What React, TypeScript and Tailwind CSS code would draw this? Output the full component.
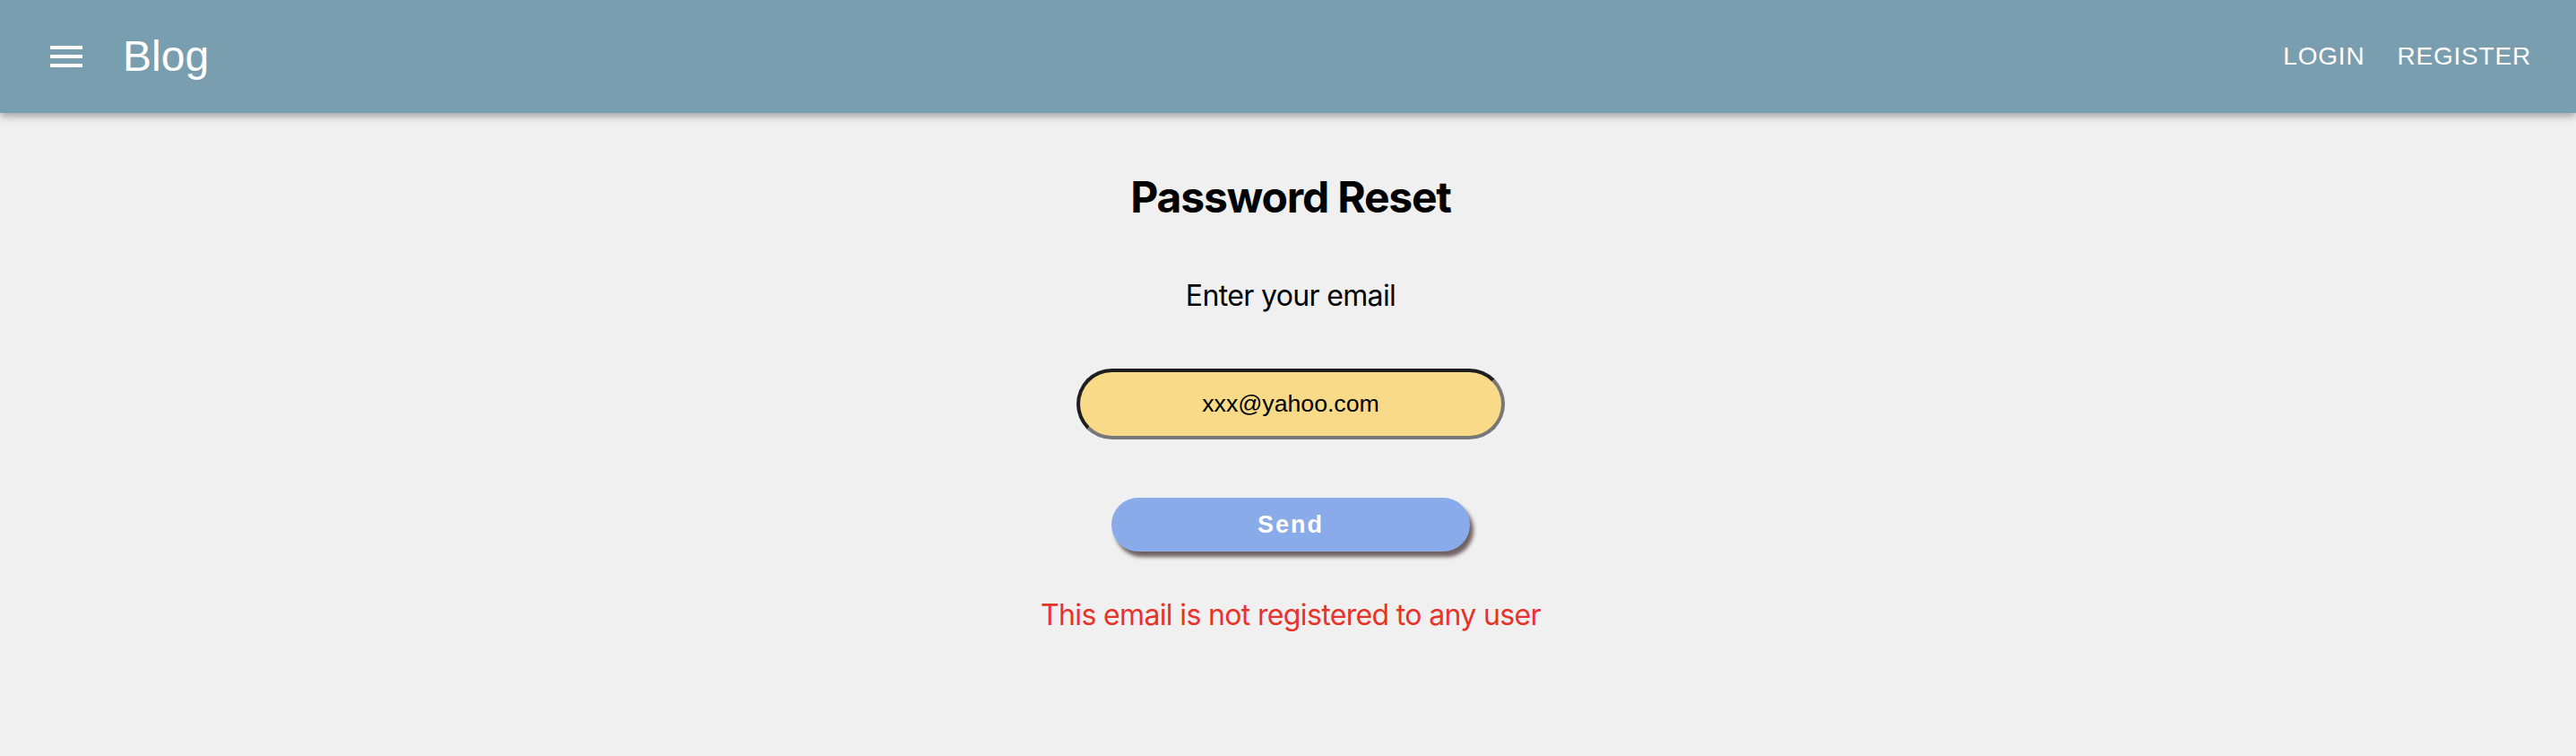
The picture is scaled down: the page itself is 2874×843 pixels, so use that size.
import React from "react";

export default function App() {
  return (
    <div className="min-h-[843px] w-full bg-[#f0f0f0]">
      <header className="relative z-10 flex h-[126px] items-center bg-[#799eb0] pl-[50px] pr-[50px] text-white shadow-[0_4px_8px_rgba(0,0,0,0.3)]">
        <svg width="48" height="48" viewBox="0 0 24 24" fill="white" aria-hidden="true">
          <path d="M3 18h18v-2H3v2zm0-5h18v-2H3v2zm0-7v2h18V6H3z" />
        </svg>
        <div className="ml-[39px] font-['Liberation_Sans',Arial,sans-serif] text-[48px] leading-none">Blog</div>
        <div className="ml-auto flex items-center gap-[36px] font-['Liberation_Sans',Arial,sans-serif] text-[28px] uppercase leading-none tracking-[0.8px]">
          <span>Login</span>
          <span>Register</span>
        </div>
      </header>
      <main className="flex flex-col items-center pl-[6px]">
        <h1 className="mt-[65px] font-['Inter',sans-serif] text-[48px] font-bold leading-[58px] tracking-[-1.2px] text-black">Password Reset</h1>
        <p className="mt-[61px] font-['Inter',sans-serif] text-[32px] leading-[39px] tracking-[-0.65px] text-black">Enter your email</p>
        <input
          className="mt-[62px] box-border h-[79px] w-[478px] rounded-full border-4 border-t-[#1e1e1e] border-l-[#1e1e1e] border-r-[#777777] border-b-[#777777] bg-[#f9da88] text-center font-['Liberation_Sans',Arial,sans-serif] text-[26.67px] text-black outline-none"
          defaultValue="xxx@yahoo.com"
        />
        <button className="mt-[65px] h-[60px] w-[400px] rounded-full bg-[#8aabea] font-['Liberation_Sans',Arial,sans-serif] text-[27px] font-bold tracking-[2px] text-white shadow-[4px_6px_4px_rgba(70,50,50,0.75)]">
          Send
        </button>
        <p className="mt-[51px] font-['Inter',sans-serif] text-[32px] leading-[39px] tracking-[-0.65px] text-[#e8322a]">This email is not registered to any user</p>
      </main>
    </div>
  );
}
